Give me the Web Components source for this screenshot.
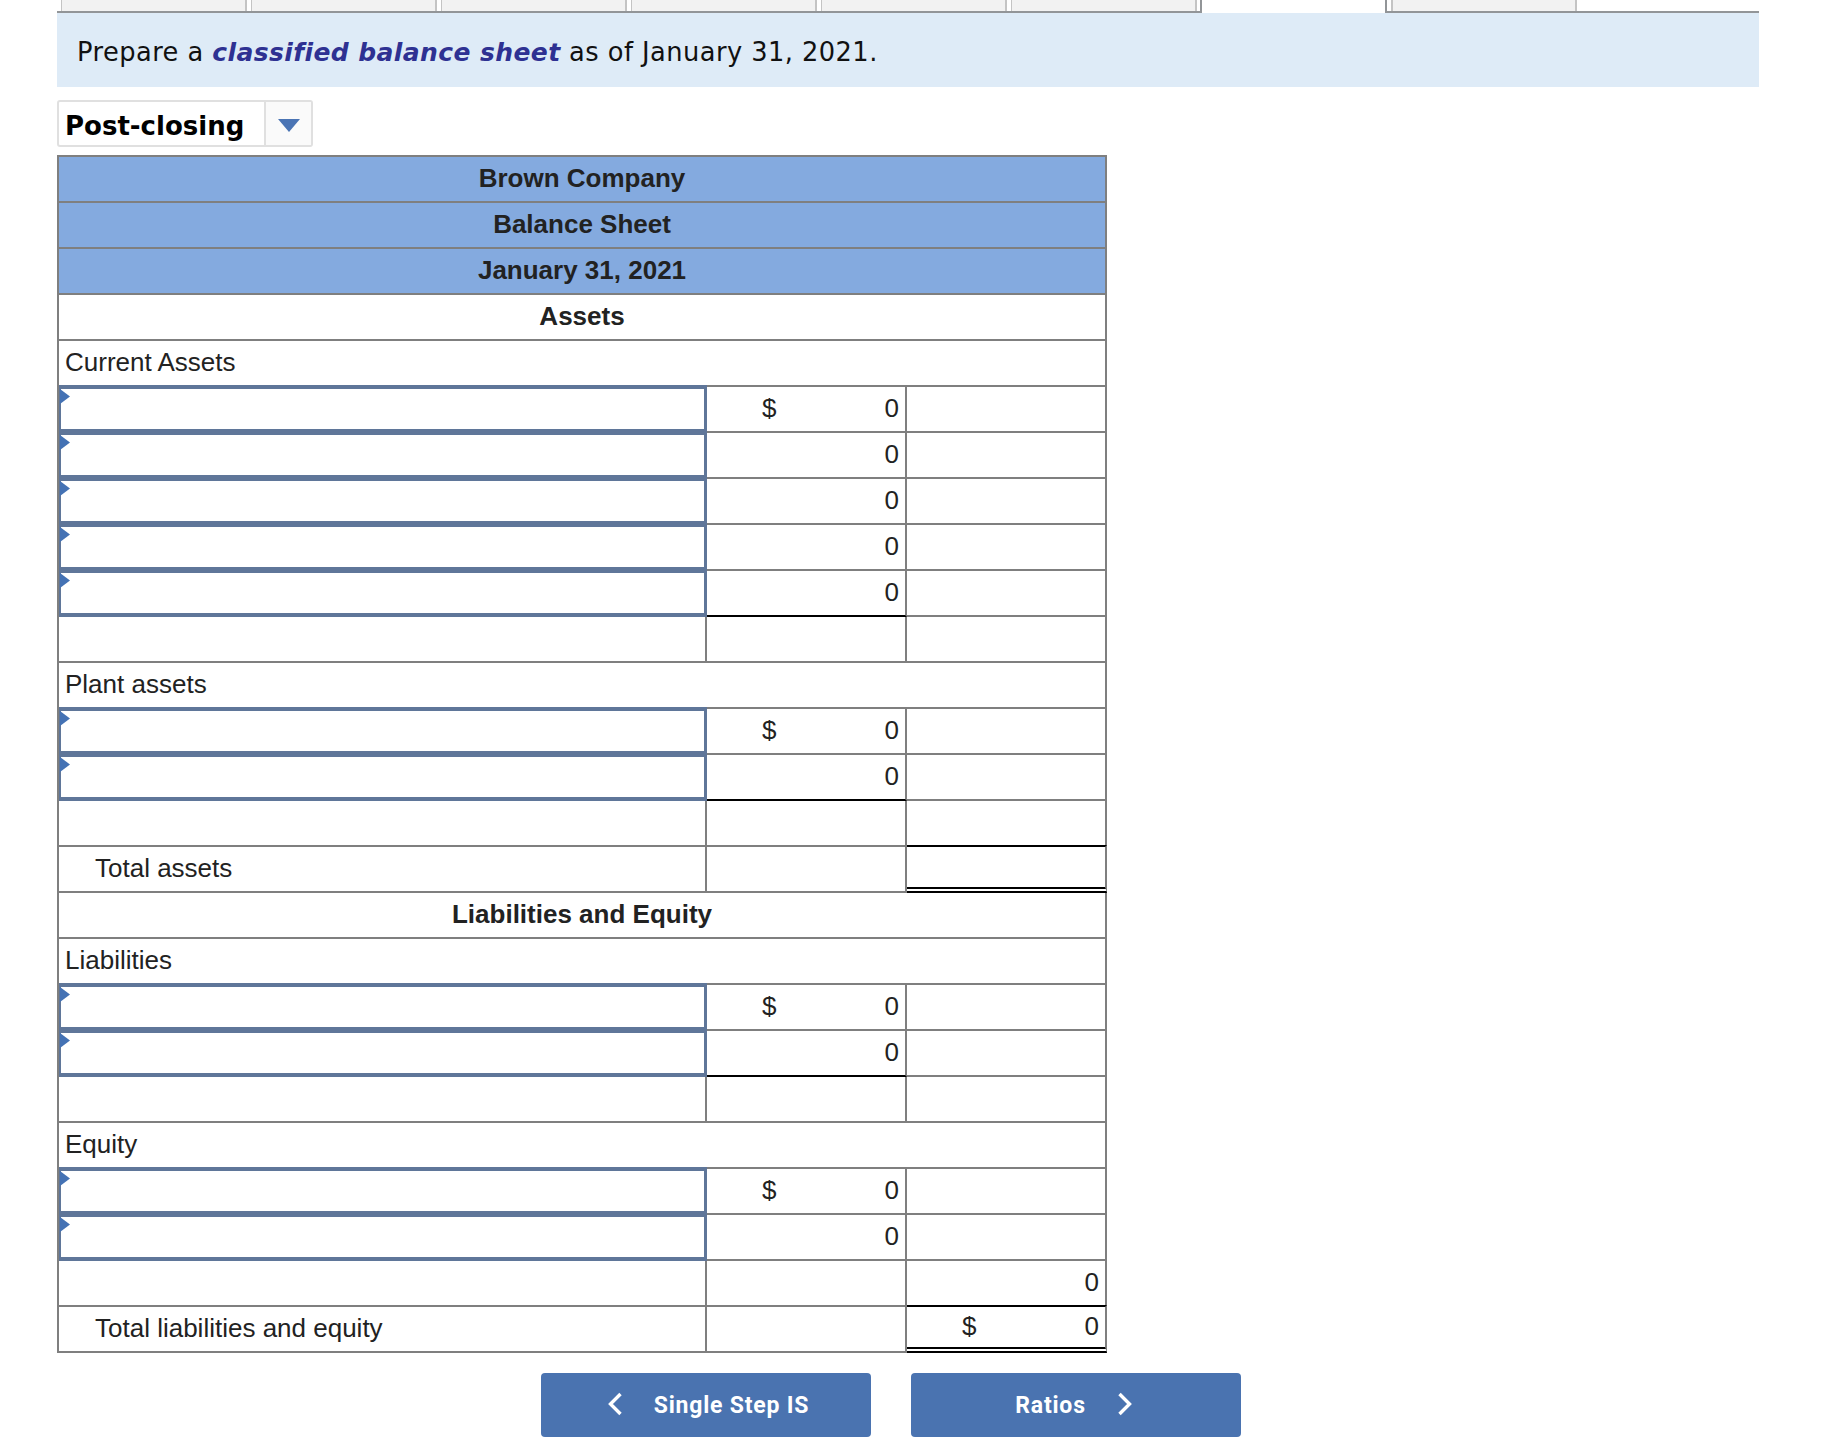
<!DOCTYPE html>
<html>
<head>
<meta charset="utf-8">
<title>Balance sheet</title>
<style>
  html, body { margin: 0; padding: 0; background: #fff; }
  body { width: 1823px; height: 1455px; overflow: hidden; }
  bs-sheet { margin-left: 57px; }
</style>
</head>
<body>
<tab-strip></tab-strip>
<task-band>Prepare a <b>classified balance sheet</b> as of January 31, 2021.</task-band>
<stage-select>Post-closing</stage-select>
<bs-sheet>
  <bs-row kind="head">Brown Company</bs-row>
  <bs-row kind="head">Balance Sheet</bs-row>
  <bs-row kind="head">January 31, 2021</bs-row>
  <bs-row kind="title">Assets</bs-row>
  <bs-row kind="section">Current Assets</bs-row>
  <bs-row kind="entry" dollar="1" amount="0"></bs-row>
  <bs-row kind="entry" amount="0"></bs-row>
  <bs-row kind="entry" amount="0"></bs-row>
  <bs-row kind="entry" amount="0"></bs-row>
  <bs-row kind="entry" amount="0" rule="1"></bs-row>
  <bs-row kind="line"></bs-row>
  <bs-row kind="section">Plant assets</bs-row>
  <bs-row kind="entry" dollar="1" amount="0"></bs-row>
  <bs-row kind="entry" amount="0" rule="1"></bs-row>
  <bs-row kind="line"></bs-row>
  <bs-row kind="line" indent="1" total="1">Total assets</bs-row>
  <bs-row kind="title">Liabilities and Equity</bs-row>
  <bs-row kind="section">Liabilities</bs-row>
  <bs-row kind="entry" dollar="1" amount="0"></bs-row>
  <bs-row kind="entry" amount="0" rule="1"></bs-row>
  <bs-row kind="line"></bs-row>
  <bs-row kind="section">Equity</bs-row>
  <bs-row kind="entry" dollar="1" amount="0"></bs-row>
  <bs-row kind="entry" amount="0"></bs-row>
  <bs-row kind="line" sum="0"></bs-row>
  <bs-row kind="line" indent="1" total="1" sum="0" sumdollar="1">Total liabilities and equity</bs-row>
</bs-sheet>
<nav-buttons>
  <nav-button dir="prev">Single Step IS</nav-button>
  <nav-button dir="next">Ratios</nav-button>
</nav-buttons>

<script>
class TabStrip extends HTMLElement {
  constructor() {
    super();
    this.attachShadow({ mode: 'open' });
  }

  connectedCallback() {
    // six closed tabs, the open one, then the last closed one
    const tabs = [0, 1, 2, 3, 4, 5].map(() => '<div class="tab"></div>').join('');
    this.shadowRoot.innerHTML = `
    <style>
      :host { display: block; height: 13px; margin-left: 57px; width: 1702px; }
      .strip { display: flex; height: 13px; }
      .tab {
        width: 186px; margin-left: 4px; box-sizing: border-box; height: 11px;
        background: #f2f2f2; border-left: 1px solid #c4c4c4; border-right: 2px solid #c4c4c4;
      }
      .tabs {
        display: flex; height: 11px; width: 1143px;
        border-bottom: 2px solid #929598; border-right: 2px solid #929598;
      }
      .open { width: 183px; height: 13px; background: #fff; }
      .rest { flex: 1; display: flex; height: 11px; border-bottom: 2px solid #929598; border-left: 2px solid #929598; }
      .rest .tab { border-left-width: 2px; }
    </style>
    <div class="strip">
      <div class="tabs">${tabs}</div>
      <div class="open"></div>
      <div class="rest"><div class="tab"></div></div>
    </div>`;
  }
}

class TaskBand extends HTMLElement {
  constructor() {
    super();
    this.attachShadow({ mode: 'open' });
    this.shadowRoot.innerHTML = `
    <style>
      :host {
        display: flex; align-items: center; box-sizing: border-box;
        margin-left: 57px; width: 1702px; height: 74px; padding: 6px 0 0 20px;
        background: #deebf7; color: #111;
        font: 25.7px/1 "DejaVu Sans", sans-serif; letter-spacing: .45px;
      }
      ::slotted(b) { color: #2e3192; font-style: italic; font-weight: bold; font-size: 25px; letter-spacing: .4px; }
    </style>
    <div><slot></slot></div>`;
  }
}

class StageSelect extends HTMLElement {
  constructor() {
    super();
    this.attachShadow({ mode: 'open' });
    this.shadowRoot.innerHTML = `
    <style>
      :host {
        display: flex; box-sizing: border-box; width: 256px; height: 47px;
        margin: 13px 0 8px 57px; background: #fff;
        border: 2px solid #e0e0e0; border-radius: 3px;
        font: bold 26px/1 "DejaVu Sans", sans-serif; color: #000;
      }
      .value { width: 205px; padding: 5px 0 0 6px; display: flex; align-items: center; box-sizing: border-box; }
      .arrow { flex: 1; display: flex; align-items: center; justify-content: center; background: #fafafa; border-left: 2px solid #e0e0e0; }
      svg { margin-top: 3px; }
    </style>
    <div class="value"><slot></slot></div>
    <div class="arrow"><svg width="22" height="13" viewBox="0 0 22 13"><path d="M0 0H22L11 13Z" fill="#4a74b4"/></svg></div>`;
  }
}

class BsSheet extends HTMLElement {
  constructor() {
    super();
    this.attachShadow({ mode: 'open' });
    this.shadowRoot.innerHTML = `
    <style>
      :host {
        display: block; box-sizing: border-box; width: 1050px;
        border-top: 2px solid #7f7f7f; border-left: 2px solid #7f7f7f;
        font: 26px/1 "Liberation Sans", Arial, sans-serif; color: #222;
      }
    </style>
    <slot></slot>`;
  }
}

class BsRow extends HTMLElement {
  constructor() {
    super();
    this.attachShadow({ mode: 'open' });
  }

  static get styles() {
    return `
      :host { display: block; height: 46px; }
      .row { display: grid; grid-template-columns: 648px 200px 200px; height: 46px; }
      .cell {
        box-sizing: border-box; height: 46px; display: flex; align-items: center; padding-bottom: 2px;
        border-right: 2px solid #7f7f7f; border-bottom: 2px solid #7f7f7f; position: relative;
      }
      .full { grid-column: 1 / 4; justify-content: center; font-weight: bold; }
      .head { background: #84aadf; }
      .label { padding-left: 6px; }
      .indent { padding-left: 36px; }
      .entry { display: block; margin-top: -2px; height: 48px; border: 0; padding: 0; }
      .entry input {
        display: block; box-sizing: border-box; width: 100%; height: 48px; margin: 0; padding: 0;
        background: #fff; border: solid #5f7699; border-width: 4px 3px 4px 2px; border-radius: 0; outline: 0;
      }
      .mark { position: absolute; left: 1px; top: 4px; }
      .num { justify-content: flex-end; padding-right: 6px; }
      .dollar { position: absolute; left: 55px; }
      .rule { border-bottom-color: #000; }
      .total { border-top: 2px solid #000; margin-top: -2px; height: 48px; }
      .double { border-bottom: 6px double #000; }
    `;
  }

  amountCell(value, dollar, extra) {
    const sign = dollar ? '<span class="dollar">$</span>' : '';
    const text = value === null ? '' : value;
    return `<div class="cell num ${extra}">${sign}${text}</div>`;
  }

  connectedCallback() {
    const kind = this.getAttribute('kind');
    const amount = this.getAttribute('amount');
    const sum = this.getAttribute('sum');
    let cells = '';

    if (kind === 'head' || kind === 'title') {
      cells = `<div class="cell full ${kind}"><slot></slot></div>`;
    } else if (kind === 'section') {
      cells = '<div class="cell label" style="grid-column:1 / 4"><slot></slot></div>';
    } else if (kind === 'entry') {
      cells = `
        <div class="cell entry">
          <input type="text">
          <svg class="mark" width="10" height="15" viewBox="0 0 10 15"><path d="M0 0L10 7.5L0 15Z" fill="#4472b4"/></svg>
        </div>
        ${this.amountCell(amount, this.hasAttribute('dollar'), this.hasAttribute('rule') ? 'rule' : '')}
        <div class="cell"></div>`;
    } else {
      const isTotal = this.hasAttribute('total');
      cells = `
        <div class="cell label ${this.hasAttribute('indent') ? 'indent' : ''}"><slot></slot></div>
        <div class="cell"></div>
        ${this.amountCell(sum, this.hasAttribute('sumdollar'), isTotal ? 'total double' : '')}`;
    }

    this.shadowRoot.innerHTML = `<style>${BsRow.styles}</style><div class="row">${cells}</div>`;
  }
}

class NavButtons extends HTMLElement {
  constructor() {
    super();
    this.attachShadow({ mode: 'open' });
    this.shadowRoot.innerHTML = `
    <style>
      :host { display: flex; gap: 40px; margin: 20px 0 0 541px; }
    </style>
    <slot></slot>`;
  }
}

class NavButton extends HTMLElement {
  constructor() {
    super();
    this.attachShadow({ mode: 'open' });
  }

  connectedCallback() {
    const prev = this.getAttribute('dir') === 'prev';
    const chevron = `<svg width="16" height="24" viewBox="0 0 16 24"><path d="${prev ? 'M13.5 2L3.5 12L13.5 22' : 'M2.5 2L12.5 12L2.5 22'}" fill="none" stroke="#fff" stroke-width="3.4"/></svg>`;
    this.shadowRoot.innerHTML = `
    <style>
      :host {
        display: flex; align-items: center; justify-content: center; gap: 31px;
        width: 330px; height: 64px; box-sizing: border-box;
        padding: ${prev ? '0 0 0 4px' : '0 4px 0 0'};
        background: #4a73b0; border-radius: 4px; color: #fff;
        font: 700 23px/1 Roboto, sans-serif; letter-spacing: .8px;
      }
      svg { display: block; margin-top: -2px; }
    </style>
    ${prev ? chevron : ''}<span><slot></slot></span>${prev ? '' : chevron}`;
  }
}

customElements.define('tab-strip', TabStrip);
customElements.define('task-band', TaskBand);
customElements.define('stage-select', StageSelect);
customElements.define('bs-sheet', BsSheet);
customElements.define('bs-row', BsRow);
customElements.define('nav-buttons', NavButtons);
customElements.define('nav-button', NavButton);
</script>
</body>
</html>
